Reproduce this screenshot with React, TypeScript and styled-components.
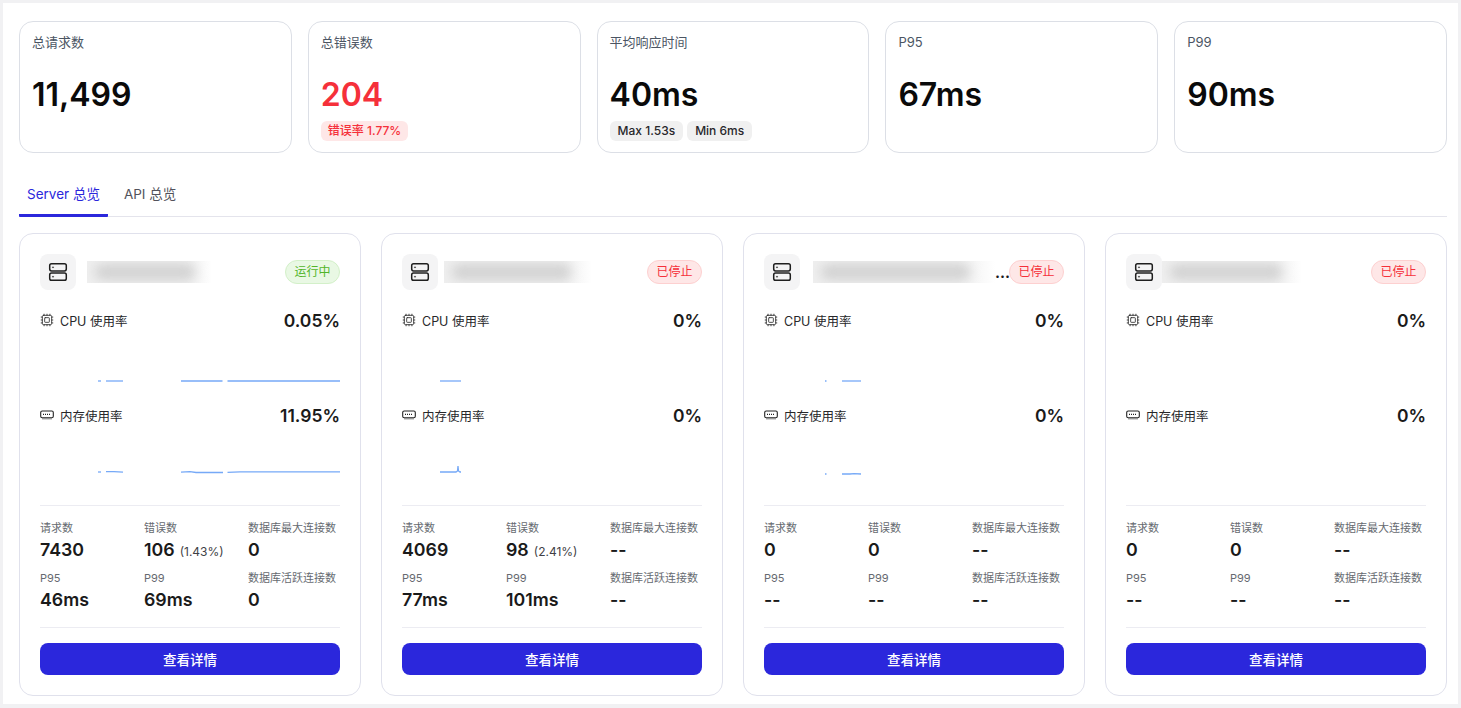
import React from 'react';
import styled, { createGlobalStyle } from 'styled-components';
import { Cpu } from 'lucide-react';

const Global = createGlobalStyle`
  html, body { margin: 0; padding: 0; background: #f1f1f3; }
  * { box-sizing: border-box; }
  body { font-family: Inter, "Noto Sans CJK SC", sans-serif; color: #1a1a1a; -webkit-font-smoothing: antialiased; }
`;

const Panel = styled.main`
  margin: 3px;
  width: 1455px;
  height: 701px;
  background: #fff;
  padding: 18px 11px 8px 16px;
  overflow: hidden;
`;

const StatRow = styled.section`
  display: grid;
  grid-template-columns: repeat(5, 1fr);
  gap: 16px;
`;

const StatCard = styled.div`
  height: 132px;
  border: 1px solid #dcdfe6;
  border-radius: 14px;
  padding: 10px 12px;
`;

const StatLabel = styled.div`
  font-size: 13px;
  line-height: 20px;
  color: #4b5563;
`;

const StatValue = styled.div<{ $danger?: boolean }>`
  margin-top: 21px;
  font-size: 32px;
  line-height: 44px;
  font-weight: 600;
  color: ${p => (p.$danger ? '#f5303a' : '#0a0a0a')};
`;

const TagRow = styled.div`
  display: flex;
  gap: 4px;
  margin-top: 4px;
`;

const Tag = styled.span<{ $danger?: boolean }>`
  height: 20px;
  padding: 0 ${p => (p.$danger ? 7 : 8)}px;
  border-radius: 6px;
  font-size: 12px;
  line-height: 20px;
  font-weight: 500;
  background: ${p => (p.$danger ? '#fee7e7' : '#f0f0f0')};
  color: ${p => (p.$danger ? '#f5303a' : '#27272a')};
`;

const Tabs = styled.nav`
  display: flex;
  gap: 8px;
  height: 48px;
  margin-top: 16px;
  border-bottom: 1px solid #e4e4ec;
`;

const Tab = styled.div<{ $active?: boolean }>`
  height: 48px;
  padding: 0 8px;
  font-size: 13.5px;
  line-height: 50px;
  color: ${p => (p.$active ? '#2b27dc' : '#52525b')};
  border-bottom: 3px solid ${p => (p.$active ? '#2b27dc' : 'transparent')};
  border-radius: 0 0 1px 1px;
`;

const ServerGrid = styled.section`
  display: grid;
  grid-template-columns: repeat(4, 342px);
  justify-content: space-between;
  margin-top: 16px;
`;

const ServerCard = styled.article`
  height: 463px;
  border: 1px solid #e0e1ec;
  border-radius: 14px;
  padding: 20px;
`;

const CardHead = styled.header`
  display: flex;
  align-items: center;
  height: 36px;
`;

const IconBox = styled.div`
  flex: none;
  width: 36px;
  height: 36px;
  border-radius: 8px;
  background: #f4f4f5;
  display: flex;
  align-items: center;
  justify-content: center;
`;

const NameWrap = styled.div`
  flex: 1;
  min-width: 0;
  display: flex;
  align-items: flex-end;
  height: 22px;
`;

const BlurName = styled.div<{ $left: number; $width: number }>`
  position: relative;
  margin-left: ${p => p.$left}px;
  width: ${p => p.$width}px;
  height: 22px;
  overflow: hidden;
  flex: none;
  background: linear-gradient(to right, #efefef, #efefef 80%, #ffffff);
  &::before {
    content: '';
    position: absolute;
    left: 8px;
    right: 14%;
    top: 4px;
    bottom: 4px;
    border-radius: 6px;
    background: #cfcfcf;
    filter: blur(6px);
  }
`;

const Ellipsis = styled.span`
  font-size: 15px;
  line-height: 14px;
  font-weight: 700;
  margin: 0 0 3px 0;
`;

const Badge = styled.span<{ $running: boolean }>`
  flex: none;
  width: 55px;
  height: 24px;
  border-radius: 12px;
  text-align: center;
  font-size: 12px;
  line-height: 22px;
  border: 1px solid ${p => (p.$running ? '#d3f0c9' : '#fdd0d0')};
  background: ${p => (p.$running ? '#e9f8e4' : '#fee7e7')};
  color: ${p => (p.$running ? '#52b52a' : '#f5303a')};
`;

const MetricBlock = styled.div`
  height: 95px;
  &:first-of-type { margin-top: 18px; }
`;

const MetricHead = styled.div`
  display: flex;
  align-items: center;
  justify-content: space-between;
  height: 24px;
`;

const MetricName = styled.div`
  display: flex;
  align-items: center;
  gap: 6px;
  font-size: 12.5px;
  color: #27272a;
`;

const MetricValue = styled.div`
  padding-top: 1px;
  font-size: 17.5px;
  font-weight: 600;
  color: #1a1a1a;
`;

const Chart = styled.svg`
  display: block;
  width: 300px;
  height: 71px;
  margin-top: 1px;
`;

const Rule = styled.hr`
  border: 0;
  height: 1px;
  margin: 0;
  background: #ececf2;
`;

const MetricsEnd = styled(Rule)`
  margin-top: 7px;
`;

const StatsGrid = styled.div`
  display: grid;
  grid-template-columns: repeat(3, 92px);
  column-gap: 12px;
  row-gap: 8px;
  padding: 14px 0 15px;
`;

const Cell = styled.div``;

const CellLabel = styled.div`
  font-size: 11px;
  line-height: 16px;
  color: #666a70;
  white-space: nowrap;
`;

const CellValue = styled.div`
  margin-top: 2px;
  height: 24px;
  font-size: 17.8px;
  line-height: 24px;
  font-weight: 600;
  color: #1a1a1a;
  white-space: nowrap;
`;

const CellNote = styled.span`
  margin-left: 5px;
  font-size: 12px;
  line-height: 1;
  font-weight: 400;
  color: #3f3f46;
`;

const DetailButton = styled.button`
  display: block;
  width: 100%;
  height: 32px;
  margin-top: 15px;
  border: 0;
  border-radius: 8px;
  background: #2b27dc;
  color: #fff;
  font-family: inherit;
  font-size: 13.5px;
  font-weight: 500;
`;

const ServerIcon = () => (
  <svg width="20" height="20" viewBox="0 0 20 20" fill="none" stroke="#1f1f1f" strokeWidth="1.5">
    <rect x="1.7" y="1.7" width="16.6" height="7.2" rx="1.8" />
    <rect x="1.7" y="11.1" width="16.6" height="7.2" rx="1.8" />
    <circle cx="5" cy="5.3" r="0.6" fill="#1f1f1f" strokeWidth="0.4" />
    <circle cx="5" cy="14.7" r="0.6" fill="#1f1f1f" strokeWidth="0.4" />
  </svg>
);

const MemoryIcon = () => (
  <svg width="14" height="14" viewBox="0 0 14 14" fill="none" stroke="#222" strokeWidth="1.1">
    <rect x="0.7" y="3" width="12.6" height="6.8" rx="1.5" />
    <path d="M3 6.4h8" strokeDasharray="1 1" />
    <path d="M2.500 10.900h9" strokeDasharray="1 1" strokeWidth="1" />
  </svg>
);

type Line = string;
interface Server {
  nameLeft: number;
  nameW: number;
  truncated?: boolean;
  running: boolean;
  cpu: string;
  mem: string;
  cpuLines: Line[];
  memLines: Line[];
  requests: string;
  errors: string;
  rate?: string;
  maxConn: string;
  p95: string;
  p99: string;
  active: string;
}

const servers: Server[] = [
  {
    nameLeft: 11, nameW: 125, running: true, cpu: '0.05%', mem: '11.95%',
    cpuLines: ['M58 48H61', 'M66 48H83', 'M141 48H182.500', 'M187.500 48H300'],
    memLines: ['M58 44H61', 'M66 43.600H74L83 44.200', 'M141 44.200L150 43.600L156 44.500H183', 'M187.500 44.300L200 43.800H300'],
    requests: '7430', errors: '106', rate: '(1.43%)', maxConn: '0', p95: '46ms', p99: '69ms', active: '0',
  },
  {
    nameLeft: 6, nameW: 148, running: false, cpu: '0%', mem: '0%',
    cpuLines: ['M38 48H59'],
    memLines: ['M38 44H54L55.500 43L56 38L56.500 43L58 44H59'],
    requests: '4069', errors: '98', rate: '(2.41%)', maxConn: '--', p95: '77ms', p99: '101ms', active: '--',
  },
  {
    nameLeft: 13, nameW: 182, truncated: true, running: false, cpu: '0%', mem: '0%',
    cpuLines: ['M61 48H62.500', 'M78 48H97'],
    memLines: ['M61 46H62.500', 'M78 46H86L90 45.600L97 46'],
    requests: '0', errors: '0', maxConn: '--', p95: '--', p99: '--', active: '--',
  },
  {
    nameLeft: 0, nameW: 140, running: false, cpu: '0%', mem: '0%',
    cpuLines: [], memLines: [],
    requests: '0', errors: '0', maxConn: '--', p95: '--', p99: '--', active: '--',
  },
];

const MiniChart = ({ lines }: { lines: Line[] }) => (
  <Chart viewBox="0 0 300 71" fill="none" stroke="#76a9f7" strokeWidth="1.3">
    {lines.map(d => <path key={d} d={d} />)}
  </Chart>
);

const ServerPanel = ({ s }: { s: Server }) => (
  <ServerCard>
    <CardHead>
      <IconBox><ServerIcon /></IconBox>
      <NameWrap>
        <BlurName $left={s.nameLeft} $width={s.nameW} />
        {s.truncated && <Ellipsis>...</Ellipsis>}
      </NameWrap>
      <Badge $running={s.running}>{s.running ? '运行中' : '已停止'}</Badge>
    </CardHead>
    <MetricBlock>
      <MetricHead>
        <MetricName><Cpu size={14} strokeWidth={1.5} color="#333" />CPU 使用率</MetricName>
        <MetricValue>{s.cpu}</MetricValue>
      </MetricHead>
      <MiniChart lines={s.cpuLines} />
    </MetricBlock>
    <MetricBlock>
      <MetricHead>
        <MetricName><MemoryIcon />内存使用率</MetricName>
        <MetricValue>{s.mem}</MetricValue>
      </MetricHead>
      <MiniChart lines={s.memLines} />
    </MetricBlock>
    <MetricsEnd />
    <StatsGrid>
      <Cell><CellLabel>请求数</CellLabel><CellValue>{s.requests}</CellValue></Cell>
      <Cell>
        <CellLabel>错误数</CellLabel>
        <CellValue>{s.errors}{s.rate && <CellNote>{s.rate}</CellNote>}</CellValue>
      </Cell>
      <Cell><CellLabel>数据库最大连接数</CellLabel><CellValue>{s.maxConn}</CellValue></Cell>
      <Cell><CellLabel>P95</CellLabel><CellValue>{s.p95}</CellValue></Cell>
      <Cell><CellLabel>P99</CellLabel><CellValue>{s.p99}</CellValue></Cell>
      <Cell><CellLabel>数据库活跃连接数</CellLabel><CellValue>{s.active}</CellValue></Cell>
    </StatsGrid>
    <Rule />
    <DetailButton>查看详情</DetailButton>
  </ServerCard>
);

export default function App() {
  return (
    <>
      <Global />
      <Panel>
        <StatRow>
          <StatCard>
            <StatLabel>总请求数</StatLabel>
            <StatValue>11,499</StatValue>
          </StatCard>
          <StatCard>
            <StatLabel>总错误数</StatLabel>
            <StatValue $danger>204</StatValue>
            <TagRow><Tag $danger>错误率 1.77%</Tag></TagRow>
          </StatCard>
          <StatCard>
            <StatLabel>平均响应时间</StatLabel>
            <StatValue>40ms</StatValue>
            <TagRow><Tag>Max 1.53s</Tag><Tag>Min 6ms</Tag></TagRow>
          </StatCard>
          <StatCard>
            <StatLabel>P95</StatLabel>
            <StatValue>67ms</StatValue>
          </StatCard>
          <StatCard>
            <StatLabel>P99</StatLabel>
            <StatValue>90ms</StatValue>
          </StatCard>
        </StatRow>
        <Tabs>
          <Tab $active>Server 总览</Tab>
          <Tab>API 总览</Tab>
        </Tabs>
        <ServerGrid>
          {servers.map((s, i) => <ServerPanel key={i} s={s} />)}
        </ServerGrid>
      </Panel>
    </>
  );
}
